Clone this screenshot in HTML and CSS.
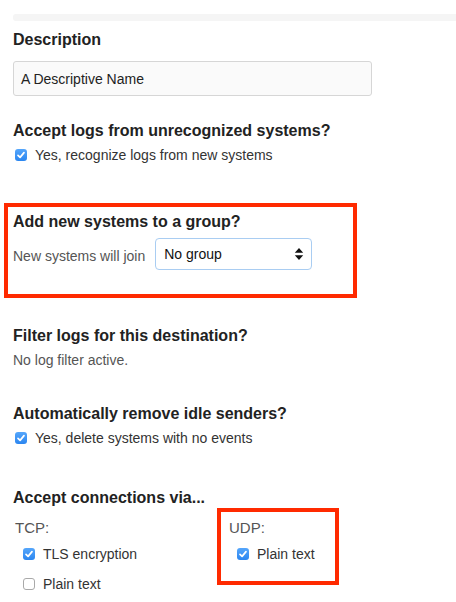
FILE: index.html
```html
<!DOCTYPE html>
<html>
<head>
<meta charset="utf-8">
<link rel="stylesheet" href="styles.css">
</head>
<body>
<div class="page">
  <div class="topbar"></div>

  <div class="heading h-desc">Description</div>
  <div class="textbox">A Descriptive Name</div>

  <div class="heading h-accept">Accept logs from unrecognized systems?</div>
  <div class="check-row row-first">
    <span class="cb checked"><svg viewBox="0 0 12 12" width="12" height="12"><polyline points="3,6.3 5.1,8.4 9,3.6" fill="none" stroke="#fff" stroke-width="1.7" stroke-linecap="round" stroke-linejoin="round"/></svg></span>
    <span class="cb-label">Yes, recognize logs from new systems</span>
  </div>

  <div class="highlight group-box">
    <div class="heading">Add new systems to a group?</div>
    <div class="join-row">
      <span class="muted">New systems will join</span>
      <div class="select">
        <span>No group</span>
        <svg class="updown" viewBox="0 0 10 14" width="10" height="14"><path d="M5 1 L9.2 5.8 H0.8 Z M5 13 L9.2 8.2 H0.8 Z" fill="#111"/></svg>
      </div>
    </div>
  </div>

  <div class="heading h-filter">Filter logs for this destination?</div>
  <div class="muted line-text">No log filter active.</div>

  <div class="heading h-auto">Automatically remove idle senders?</div>
  <div class="check-row row-first">
    <span class="cb checked"><svg viewBox="0 0 12 12" width="12" height="12"><polyline points="3,6.3 5.1,8.4 9,3.6" fill="none" stroke="#fff" stroke-width="1.7" stroke-linecap="round" stroke-linejoin="round"/></svg></span>
    <span class="cb-label">Yes, delete systems with no events</span>
  </div>

  <div class="heading h-conn">Accept connections via...</div>
  <div class="proto-grid">
    <div class="proto-col tcp">
      <div class="proto-title">TCP:</div>
      <div class="check-row indent">
        <span class="cb checked"><svg viewBox="0 0 12 12" width="12" height="12"><polyline points="3,6.3 5.1,8.4 9,3.6" fill="none" stroke="#fff" stroke-width="1.7" stroke-linecap="round" stroke-linejoin="round"/></svg></span>
        <span class="cb-label">TLS encryption</span>
      </div>
      <div class="check-row indent second">
        <span class="cb"></span>
        <span class="cb-label">Plain text</span>
      </div>
    </div>
    <div class="proto-col highlight udp">
      <div class="proto-title">UDP:</div>
      <div class="check-row indent">
        <span class="cb checked"><svg viewBox="0 0 12 12" width="12" height="12"><polyline points="3,6.3 5.1,8.4 9,3.6" fill="none" stroke="#fff" stroke-width="1.7" stroke-linecap="round" stroke-linejoin="round"/></svg></span>
        <span class="cb-label">Plain text</span>
      </div>
    </div>
  </div>
</div>
</body>
</html>
```

FILE: styles.css
```css
html, body {
  margin: 0;
  padding: 0;
  background: #fff;
}

body {
  font-family: "Liberation Sans", Arial, Helvetica, sans-serif;
  font-size: 14px;
  line-height: 20px;
  color: #333;
  overflow: hidden;
}

.page {
  padding: 0 0 0 13px;
}

.topbar {
  margin-top: 14px;
  height: 7px;
  background: #f5f5f5;
  border-radius: 3px 0 0 3px;
}

.heading {
  font-size: 16px;
  font-weight: bold;
  line-height: 20px;
  color: #222;
}

.h-desc { margin-top: 9px; }

.textbox {
  margin-top: 11px;
  width: 359px;
  height: 35px;
  box-sizing: border-box;
  border: 1px solid #d6d6d6;
  border-radius: 3px;
  background: #fafafa;
  padding: 0 7px;
  display: flex;
  align-items: center;
  font-size: 14px;
  color: #222;
}

.h-accept { margin-top: 25px; }

.check-row {
  display: flex;
  align-items: center;
  height: 20px;
}

.row-first {
  margin-top: 4px;
  padding-left: 2px;
}

.cb {
  width: 12px;
  height: 12px;
  box-sizing: border-box;
  border-radius: 3px;
  border: 1px solid #a9a9a9;
  background: #fff;
  margin-right: 8px;
  flex: none;
  display: flex;
}

.cb.checked {
  border: none;
  background: linear-gradient(#55a6fb, #2b86f0);
}

.cb svg { display: block; }

.cb-label {
  color: #333;
}

.highlight {
  border: 4px solid #ff2a00;
}

.group-box {
  margin-top: 38px;
  margin-left: -9px;
  width: 353px;
  box-sizing: border-box;
  padding: 5px 5px 24px;
}

.join-row {
  margin-top: 6px;
  display: flex;
  align-items: center;
}

.muted {
  color: #555;
}

.join-row .muted {
  margin-top: 3px;
  font-size: 14px;
}

.select {
  margin-left: 10px;
  width: 157px;
  height: 32px;
  box-sizing: border-box;
  border: 1px solid #a9cdf2;
  border-radius: 4px;
  background: #fff;
  display: flex;
  align-items: center;
  justify-content: space-between;
  padding: 0 7px 0 8px;
  color: #111;
}

.updown { display: block; }

.h-filter { margin-top: 28px; }

.line-text {
  margin-top: 4px;
  font-size: 14px;
}

.h-auto { margin-top: 34px; }

.h-conn { margin-top: 40px; }

.proto-grid {
  display: grid;
  grid-template-columns: 204px 122px;
  align-items: start;
}

.proto-col {
  box-sizing: border-box;
}

.tcp {
  padding: 10px 0 0 2px;
}

.udp {
  padding: 6px 0 17px 8px;
}

.proto-title {
  font-size: 15px;
  line-height: 20px;
  color: #555;
}

.indent {
  margin-top: 6px;
  padding-left: 8px;
}

.second {
  margin-top: 10px;
}
```
